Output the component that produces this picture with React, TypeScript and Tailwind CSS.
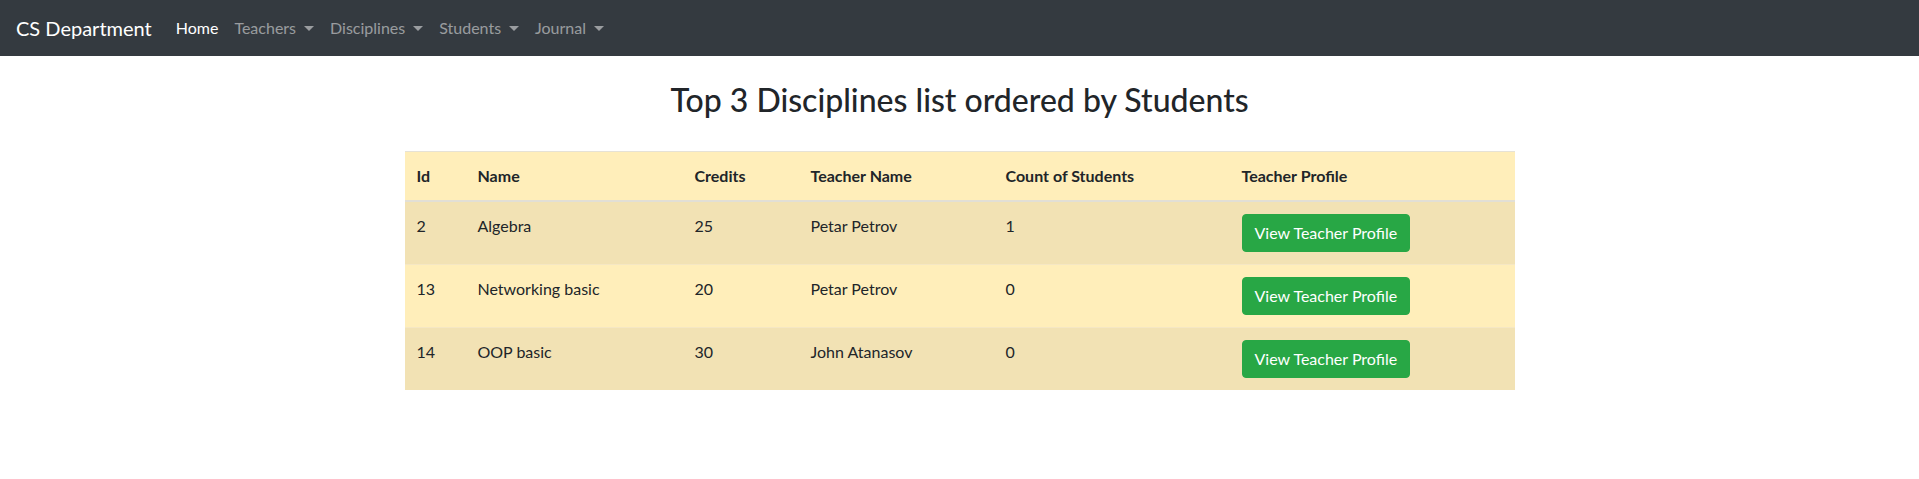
import React from 'react';

type Discipline = {
  id: number;
  name: string;
  credits: number;
  teacher: string;
  students: number;
};

const disciplines: Discipline[] = [
  { id: 2, name: 'Algebra', credits: 25, teacher: 'Petar Petrov', students: 1 },
  { id: 13, name: 'Networking basic', credits: 20, teacher: 'Petar Petrov', students: 0 },
  { id: 14, name: 'OOP basic', credits: 30, teacher: 'John Atanasov', students: 0 },
];

const menus = ['Teachers', 'Disciplines', 'Students', 'Journal'];

function Caret() {
  return (
    <span className="ml-[8px] inline-block align-[3px] border-x-[5px] border-t-[5px] border-x-transparent border-t-current" />
  );
}

function Navbar() {
  return (
    <nav className="h-[56px] bg-[#343a40] flex items-center px-4">
      <a className="text-white text-[20px] mr-4 leading-[30px]">CS Department</a>
      <ul className="flex items-center text-[16px]">
        <li className="px-2 text-white">Home</li>
        {menus.map((m) => (
          <li key={m} className="px-2 text-white/50 flex items-center">
            {m}
            <Caret />
          </li>
        ))}
      </ul>
    </nav>
  );
}

export default function App() {
  return (
    <div className="min-h-screen bg-white text-[#212529] font-['Segoe_UI',Lato,'Noto_Sans',sans-serif] text-[16px] leading-6">
      <Navbar />
      <main className="max-w-[1140px] mx-auto px-[15px]">
        <h2 className="text-center text-[32px] font-medium leading-[1.2] mt-[25px] mb-[32px]">
          Top 3 Disciplines list ordered by Students
        </h2>

        <table className="w-full border-collapse">
          <thead>
            <tr className="bg-[#ffeeba] text-left">
              <th className="w-[61px] px-3 py-3 border-t border-b-2 border-t-[#e6e2d6] border-b-[#e2dfd5] font-bold">Id</th>
              <th className="w-[217px] px-3 py-3 border-t border-b-2 border-t-[#e6e2d6] border-b-[#e2dfd5] font-bold">Name</th>
              <th className="w-[116px] px-3 py-3 border-t border-b-2 border-t-[#e6e2d6] border-b-[#e2dfd5] font-bold">Credits</th>
              <th className="w-[195px] px-3 py-3 border-t border-b-2 border-t-[#e6e2d6] border-b-[#e2dfd5] font-bold">Teacher Name</th>
              <th className="w-[236px] px-3 py-3 border-t border-b-2 border-t-[#e6e2d6] border-b-[#e2dfd5] font-bold">Count of Students</th>
              <th className="px-3 py-3 border-t border-b-2 border-t-[#e6e2d6] border-b-[#e2dfd5] font-bold">Teacher Profile</th>
            </tr>
          </thead>
          <tbody>
            {disciplines.map((d, i) => (
              <tr
                key={d.id}
                className={`align-top border-t border-[#f5e7c4] ${i % 2 === 0 ? 'bg-[#f2e2b4]' : 'bg-[#ffeeba]'}`}
              >
                <td className="px-3 py-3">{d.id}</td>
                <td className="px-3 py-3">{d.name}</td>
                <td className="px-3 py-3">{d.credits}</td>
                <td className="px-3 py-3">{d.teacher}</td>
                <td className="px-3 py-3">{d.students}</td>
                <td className="px-3 py-3">
                  <button className="h-[38px] px-3 rounded-[4px] bg-[#28a745] text-white border border-[#28a745]">
                    View Teacher Profile
                  </button>
                </td>
              </tr>
            ))}
          </tbody>
        </table>
      </main>
    </div>
  );
}
